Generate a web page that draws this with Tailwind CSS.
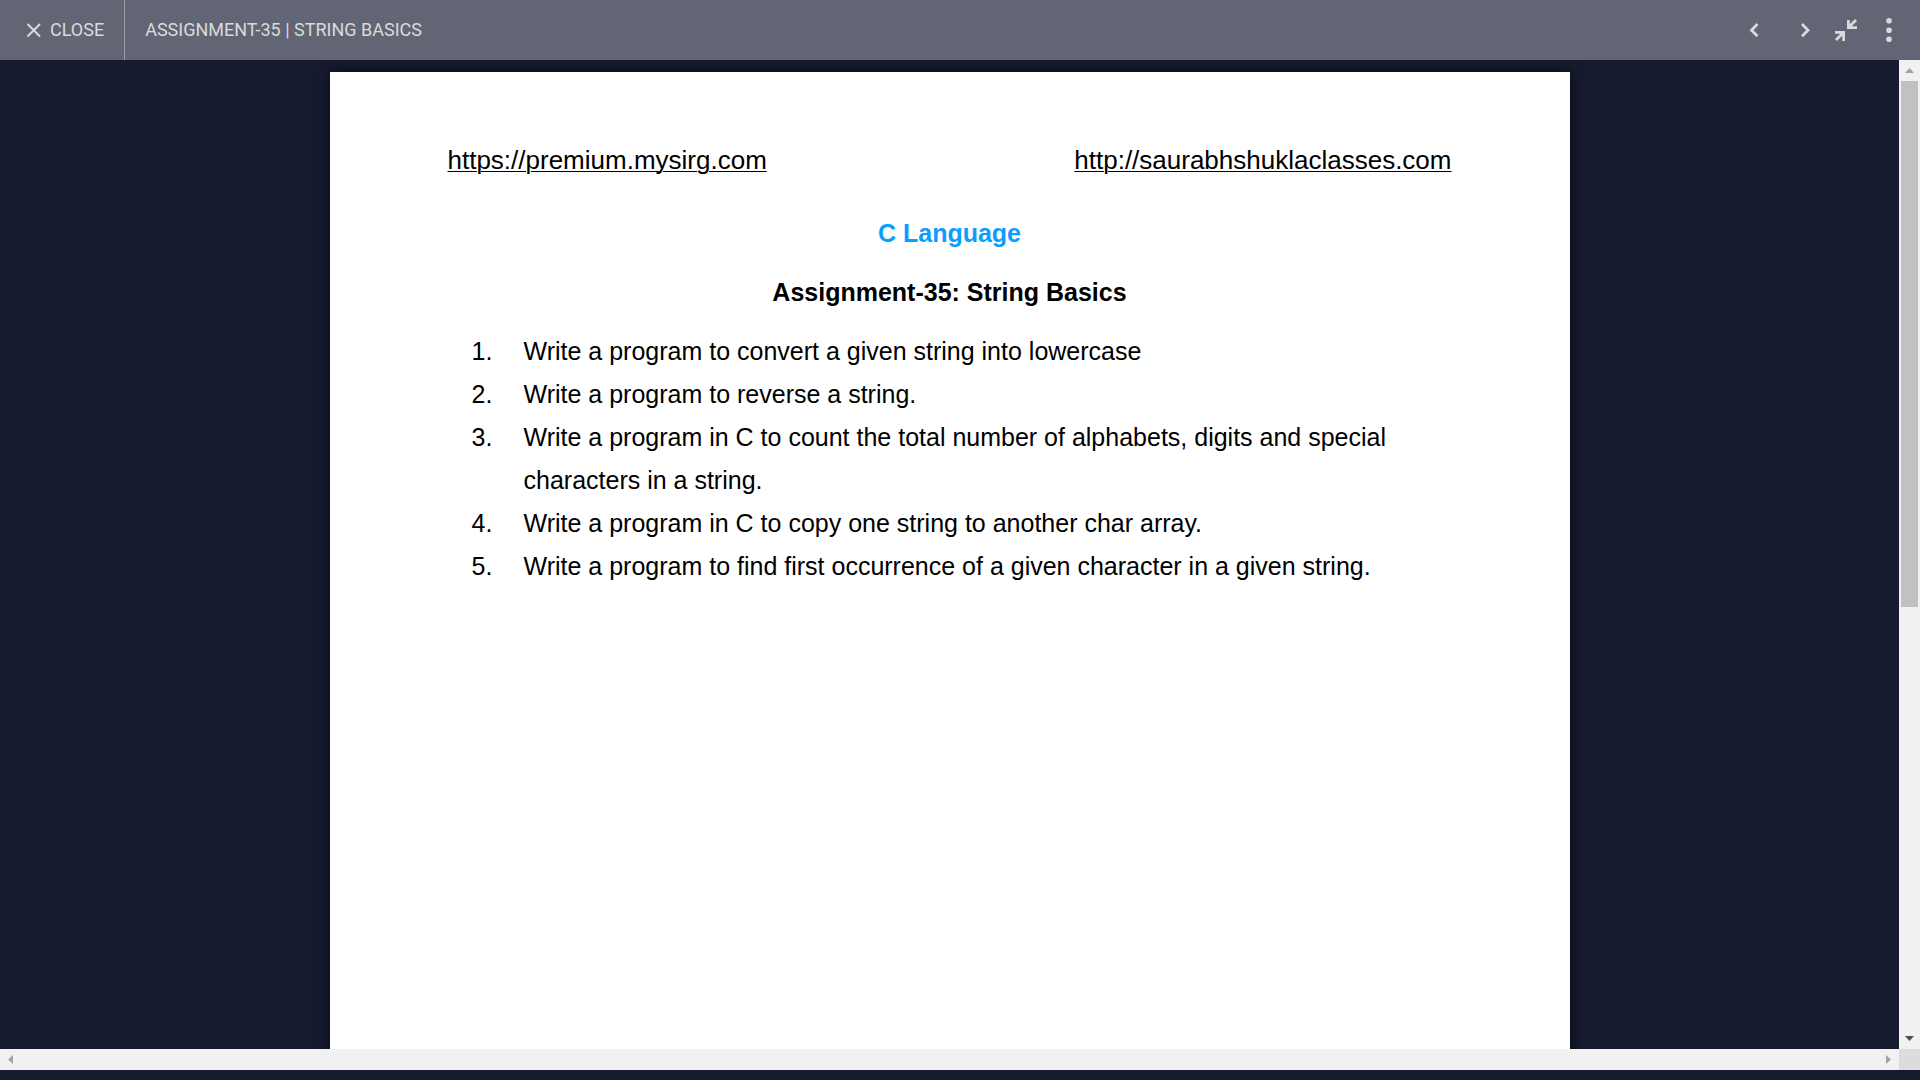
<!DOCTYPE html>
<html lang="en">
<head>
<meta charset="utf-8">
<title>Assignment-35 | String Basics</title>
<script src="https://cdn.jsdelivr.net/npm/@tailwindcss/browser@4"></script>
</head>
<body class="flex h-screen flex-col overflow-hidden bg-[#161b30] font-['Liberation_Sans',sans-serif]">
  <header class="flex h-[60px] shrink-0 items-stretch bg-[#626573] font-['Roboto',sans-serif] text-lg text-[#d9dade]">
    <button type="button" class="flex items-center gap-2 border-r border-[#9a9ca6] pr-5 pb-px pl-[26px]">
      <svg class="size-4" viewBox="0 0 16 16" fill="none" stroke="currentColor" stroke-width="2" aria-hidden="true"><path d="M1.500 2 14 14.500M14 2 1.500 14.500"/></svg>
      <span>CLOSE</span>
    </button>
    <h1 class="flex flex-1 items-center pb-px pl-5">ASSIGNMENT-35 | STRING BASICS</h1>
    <nav class="flex items-center pr-[15px]" aria-label="Viewer">
      <button type="button" class="flex w-[51px] justify-center" aria-label="Previous">
        <svg class="h-4 w-3" viewBox="0 0 12 16" fill="none" stroke="currentColor" stroke-width="2.800" aria-hidden="true"><path d="M9.500 2 3.500 8.300l6 6"/></svg>
      </button>
      <button type="button" class="flex w-[51px] justify-center" aria-label="Next">
        <svg class="h-4 w-3" viewBox="0 0 12 16" fill="none" stroke="currentColor" stroke-width="2.800" aria-hidden="true"><path d="m3 2 6 6.300-6 6"/></svg>
      </button>
      <button type="button" class="flex w-8 justify-center" aria-label="Exit full screen">
        <svg class="size-[22px]" viewBox="0 0 22 22" fill="none" stroke="currentColor" stroke-width="2.800" aria-hidden="true"><path d="M21 1 14 8M13.400 1V8.600H22M1 21 8 14M0 13.400H8.600V22"/></svg>
      </button>
      <button type="button" class="ml-[11px] flex w-8 justify-center" aria-label="More options">
        <svg class="h-6 w-6" viewBox="0 0 24 24" fill="currentColor" aria-hidden="true"><circle cx="12" cy="2.800" r="2.800"/><circle cx="12" cy="12.200" r="2.800"/><circle cx="12" cy="21.200" r="2.800"/></svg>
      </button>
    </nav>
  </header>

  <div class="grid min-h-0 flex-1 grid-cols-[1fr_21px] grid-rows-[minmax(0,1fr)_21px] pb-[10px]">
    <main class="flex justify-center overflow-hidden pt-3">
      <article class="h-[1754px] w-full max-w-[1240px] bg-white px-[118px] pt-[73px] text-[25px] leading-[30px] text-black shadow-[0_0_12px_rgba(0,0,0,0.7)]">
        <div class="flex justify-between text-[26px]">
          <a class="underline decoration-1 underline-offset-2" href="https://premium.mysirg.com">https://premium.mysirg.com</a>
          <a class="underline decoration-1 underline-offset-2" href="http://saurabhshuklaclasses.com">http://saurabhshuklaclasses.com</a>
        </div>
        <h2 class="mt-[43px] text-center font-bold text-[#0c9dff]">C Language</h2>
        <h3 class="mt-[29px] text-center font-bold">Assignment-35: String Basics</h3>
        <ol class="mt-[23px] leading-[43px]">
          <li class="flex"><span class="w-[76px] shrink-0 pl-6">1.</span><span>Write a program to convert a given string into lowercase</span></li>
          <li class="flex"><span class="w-[76px] shrink-0 pl-6">2.</span><span>Write a program to reverse a string.</span></li>
          <li class="flex"><span class="w-[76px] shrink-0 pl-6">3.</span><span>Write a program in C to count the total number of alphabets, digits and special characters in a string.</span></li>
          <li class="flex"><span class="w-[76px] shrink-0 pl-6">4.</span><span>Write a program in C to copy one string to another char array.</span></li>
          <li class="flex"><span class="w-[76px] shrink-0 pl-6">5.</span><span>Write a program to find first occurrence of a given character in a given string.</span></li>
        </ol>
      </article>
    </main>

    <!-- Vertical scroll bar -->
    <div class="flex flex-col items-center bg-[#f1f1f1]">
      <div class="flex h-[21px] shrink-0 items-center justify-center"><svg class="h-[5px] w-[9px]" viewBox="0 0 9 5" fill="#a3a3a3" aria-hidden="true"><path d="M0 5 4.500 0 9 5z"/></svg></div>
      <div class="min-h-0 w-[17px] flex-1"><div class="h-5/9 bg-[#c1c1c1]"></div></div>
      <div class="flex h-[21px] shrink-0 items-center justify-center"><svg class="h-[5px] w-[9px]" viewBox="0 0 9 5" fill="#505050" aria-hidden="true"><path d="M0 0 4.500 5 9 0z"/></svg></div>
    </div>

    <!-- Horizontal scroll bar -->
    <div class="flex items-center justify-between bg-[#f1f1f1] px-2">
      <svg class="h-[9px] w-[5px]" viewBox="0 0 5 9" fill="#a3a3a3" aria-hidden="true"><path d="M5 0 0 4.500 5 9z"/></svg>
      <svg class="h-[9px] w-[5px]" viewBox="0 0 5 9" fill="#a3a3a3" aria-hidden="true"><path d="M0 0 5 4.500 0 9z"/></svg>
    </div>
    <div class="bg-[#dcdcdc]"></div>
  </div>
</body>
</html>
